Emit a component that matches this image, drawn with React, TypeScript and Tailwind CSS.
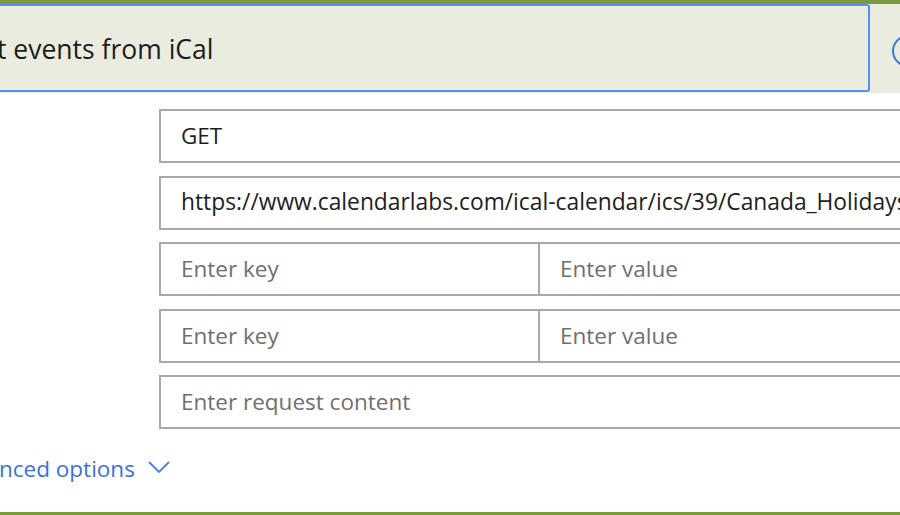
import React from "react";

const font = { fontFamily: '"Open Sans", "Noto Sans", sans-serif' };

function Field({ children, placeholder, size = "text-[22.5px]" }: { children?: React.ReactNode; placeholder?: boolean; size?: string }) {
  return (
    <div
      className={`h-[54px] w-[800px] shrink-0 border-2 border-[#a9a9a9] flex items-center pl-[20px] ${size} ${
        placeholder ? "text-[#6f6f6f]" : "text-[#1e1e1e]"
      } whitespace-nowrap overflow-hidden`}
    >
      {children}
    </div>
  );
}

function KeyValue() {
  return (
    <div className="h-[54px] w-[800px] shrink-0 border-2 border-[#a9a9a9] flex text-[22.5px] text-[#6f6f6f]">
      <div className="w-[379px] shrink-0 border-r-2 border-[#a9a9a9] flex items-center pl-[20px]">Enter key</div>
      <div className="flex-1 flex items-center pl-[20px]">Enter value</div>
    </div>
  );
}

export default function App() {
  return (
    <div className="w-[900px] h-[515px] overflow-hidden bg-white flex flex-col" style={font}>
      <div className="h-[4px] shrink-0 bg-[#7b9a40]" />
      <div className="h-[89px] shrink-0 bg-[#eaecdf] flex items-start overflow-hidden">
        <div className="-ml-[4px] w-[874px] h-[88px] shrink-0 border-2 border-[#5b8cf5] rounded-[3px] flex items-center text-[26.5px] text-[#1c1c1c] whitespace-nowrap">
          <span className="-ml-[1px] mt-[3px]">t events from iCal</span>
        </div>
        <div className="ml-[22px] mt-[31px] w-[32px] h-[32px] shrink-0 rounded-full border-2 border-[#3a78e0]" />
      </div>
      <div className="flex-1 flex flex-col pl-[159px] pt-[16px] gap-[12.5px] overflow-hidden">
        <Field>GET</Field>
        <Field size="text-[22.8px]">https://www.calendarlabs.com/ical-calendar/ics/39/Canada_Holidays.ics</Field>
        <KeyValue />
        <KeyValue />
        <Field placeholder>Enter request content</Field>
      </div>
      <div className="h-[80px] shrink-0 flex items-start pt-[22px] -ml-[1px]">
        <span className="text-[22.5px] text-[#3b72d8] leading-[30px]">nced options</span>
        <svg className="ml-[12px] mt-[6px]" width="24" height="14" viewBox="0 0 24 14" fill="none">
          <path d="M2 2 L12 12 L22 2" stroke="#4a80e3" strokeWidth="1.8" />
        </svg>
      </div>
      <div className="h-[3px] shrink-0 bg-[#7b9a3a]" />
    </div>
  );
}
